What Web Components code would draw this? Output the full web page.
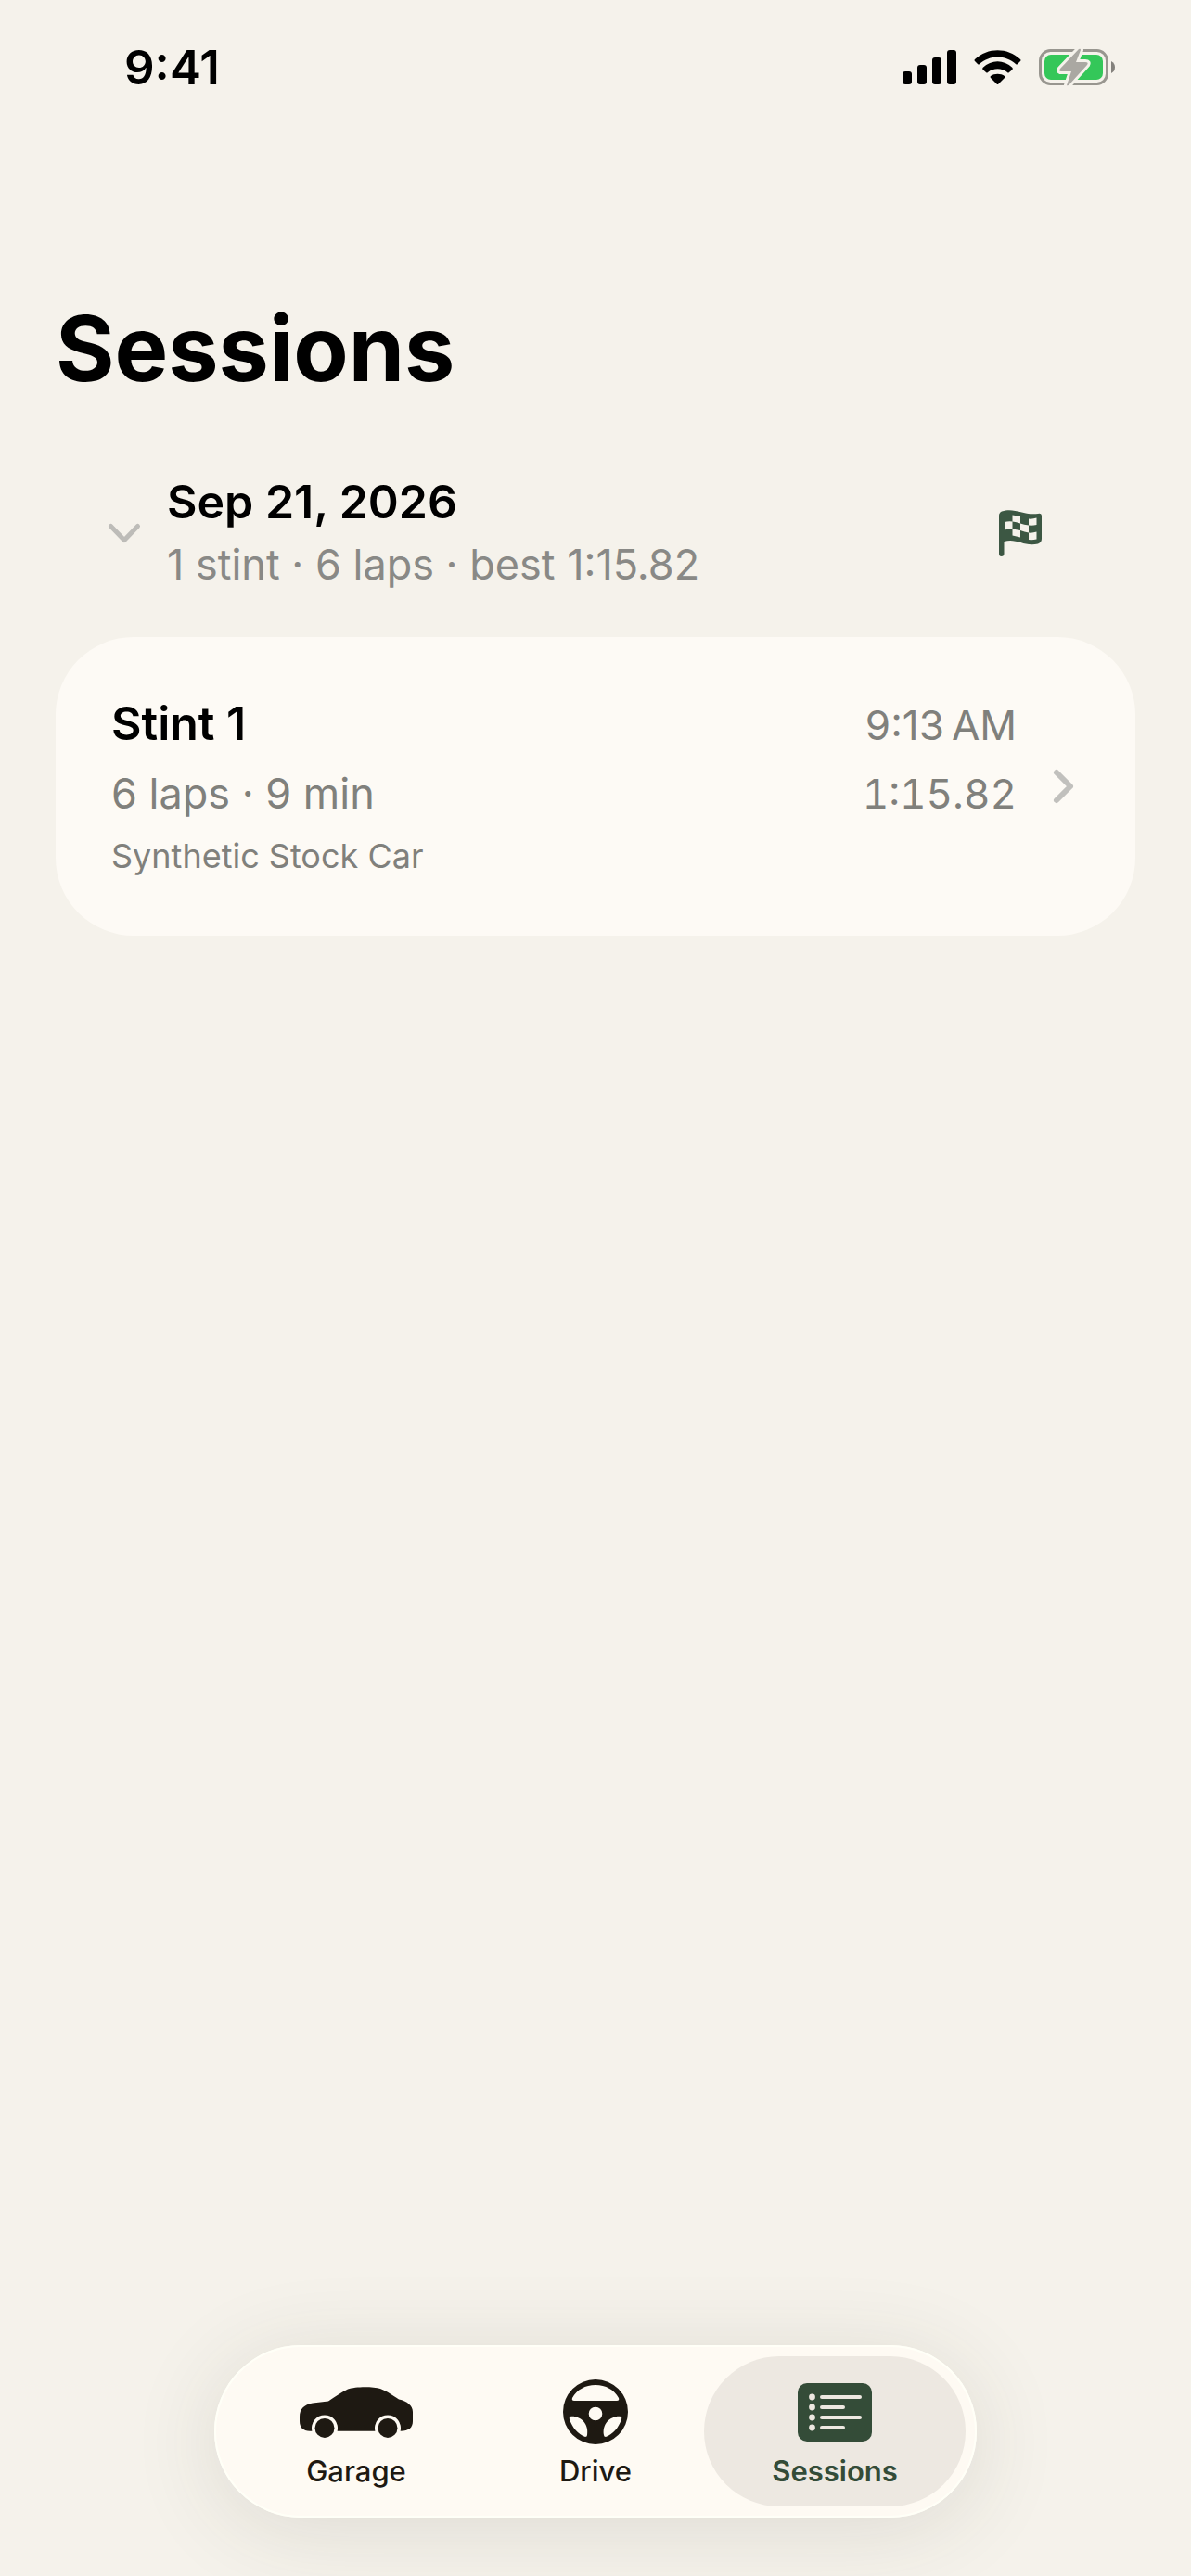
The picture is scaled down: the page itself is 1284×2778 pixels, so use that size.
<!DOCTYPE html>
<html lang="en">
<head>
<meta charset="utf-8">
<meta name="viewport" content="width=device-width, initial-scale=1">
<title>Sessions</title>
<style>
    html {
        --background: #f5f2eb;
        --surface: #fdfaf5;
        --ink: #1e1912;
        --accent: #344c38;
        --secondary: #80807c;
        --chevron: #c1c0bd;
    }

    body {
        margin: 0;
        min-height: 100vh;
        background: var(--background);
        color: #000;
        font-family: Inter, "Liberation Sans", sans-serif;
    }
</style>
</head>
<body>
<sl-app>
    <sl-status-bar slot="status" time="9:41"></sl-status-bar>
    <h1 slot="title">Sessions</h1>
    <sl-day-group>
        <span slot="date">Sep 21, 2026</span>
        <span slot="summary">1 stint · 6 laps · best 1:15.82</span>
        <sl-stint-card href="#stint-1">
            <span slot="name">Stint 1</span>
            <span slot="start">9:13&#8239;AM</span>
            <span slot="detail">6 laps · 9 min</span>
            <span slot="best">1:15.82</span>
            <span slot="car">Synthetic Stock Car</span>
        </sl-stint-card>
    </sl-day-group>
    <sl-tab-bar slot="tabs">
        <sl-tab href="#garage">
            <svg slot="icon" width="122" height="55" viewBox="0 0 122 55" aria-hidden="true">
                <path fill="currentColor" d="M11 47.700C4 47.500 0 44 0 37V32C0 24 5 19 14 17.500L31 15.500C38 11 44 6 52 2.500C60 -.5 79 -.5 87 2C95 5 100 9 107 13.500C116 15.500 122 20 122 27V37C122 44 118 47.500 108.600 47.700A14 14 0 1 0 81.400 47.700H40.600A14 14 0 1 0 13.400 47.700Z"/>
                <circle cx="27" cy="44.400" r="10.500" fill="currentColor"/>
                <circle cx="95" cy="44.400" r="10.500" fill="currentColor"/>
            </svg>
            Garage
        </sl-tab>
        <sl-tab href="#drive">
            <svg slot="icon" width="70" height="70" viewBox="0 0 70 70" aria-hidden="true">
                <path fill="currentColor" fill-rule="evenodd" d="M35 0A35 35 0 1 1 35 70A35 35 0 1 1 35 0ZM12 23H58Q61 23 60 20C55 11 46 6 35 6S15 11 10 20Q9 23 12 23ZM35 29.700A7.300 7.300 0 1 0 35 44.300A7.300 7.300 0 1 0 35 29.700ZM9 39.800Q6 40 7 43C10 52 16 59 24 62Q26 62 26 60C28 49 20 39.500 9 39.800ZM61 39.800Q64 40 63 43C60 52 54 59 46 62Q44 62 44 60C42 49 50 39.500 61 39.800Z"/>
            </svg>
            Drive
        </sl-tab>
        <sl-tab href="#sessions" selected>
            <svg slot="icon" width="80" height="63" viewBox="0 0 80 63" aria-hidden="true">
                <rect width="80" height="63" rx="10" fill="currentColor"/>
                <g fill="#ede8e1">
                    <circle cx="15.500" cy="15" r="3.400"/><circle cx="15.500" cy="26" r="3.400"/>
                    <circle cx="15.500" cy="37" r="3.400"/><circle cx="15.500" cy="48" r="3.400"/>
                    <rect x="24" y="13" width="45" height="4" rx="2"/><rect x="24" y="24" width="27" height="4" rx="2"/>
                    <rect x="24" y="35" width="45" height="4" rx="2"/><rect x="24" y="46" width="27" height="4" rx="2"/>
                </g>
            </svg>
            Sessions
        </sl-tab>
    </sl-tab-bar>
</sl-app>

<script>
class App extends HTMLElement {
    constructor() {
        super();
        this.attachShadow({ mode: 'open' });
        this.shadowRoot.innerHTML = `
            <style>
                :host {
                    display: flex;
                    flex-direction: column;
                    min-height: 100vh;
                }

                main {
                    flex: 1;
                    padding: 0 60px;
                }

                ::slotted(h1) {
                    margin: 174px 0 0;
                    font-size: 97px;
                    line-height: 124px;
                    font-weight: 700;
                }
            </style>
            <slot name="status"></slot>
            <main>
                <slot name="title"></slot>
                <slot></slot>
            </main>
            <slot name="tabs"></slot>
        `;
    }
}

class StatusBar extends HTMLElement {
    constructor() {
        super();
        this.attachShadow({ mode: 'open' });
        this.shadowRoot.innerHTML = `
            <style>
                :host {
                    display: flex;
                    align-items: center;
                    justify-content: space-between;
                    height: 60px;
                    padding: 43px 82px 37px 134px;
                }

                time {
                    font-size: 51px;
                    line-height: 60px;
                    font-weight: 600;
                }

                .indicators {
                    display: flex;
                    align-items: center;
                    gap: 18px;
                }

                svg {
                    display: block;
                }
            </style>
            <time></time>
            <div class="indicators">
                <svg width="59" height="38" viewBox="0 0 59 38" role="img" aria-label="Signal">
                    <rect x="0" y="23" width="10" height="14" rx="3"/>
                    <rect x="16" y="16" width="10" height="21" rx="3"/>
                    <rect x="32" y="8" width="10" height="29" rx="3"/>
                    <rect x="48" y="0" width="10" height="37" rx="3"/>
                </svg>
                <svg width="52" height="38" viewBox="0 0 52 38" role="img" aria-label="Wi-Fi">
                    <path d="M1 10C15 -3 36 -3 50 10Q51 11 50 12L47 15Q46 16 45 15C34 5 17 5 6 15Q5 16 4 15L1 12Q0 11 1 10Z"/>
                    <path d="M9.500 19C19 10 32 10 41.500 19Q42 20 41.500 21L38 24Q37 25 36 24C30 19 21 19 15 24Q14 25 13 24L9.500 21Q9 20 9.500 19Z"/>
                    <path d="M18 28C22 25 29 25 33 28Q34 29 33 30L26.500 36.500Q25.500 37.500 24.500 36.500L18 30Q17 29 18 28Z"/>
                </svg>
                <svg width="82" height="42" viewBox="0 0 82 42" role="img" aria-label="Battery charging">
                    <rect x="1.500" y="2.500" width="72" height="36" rx="11" fill="none" stroke="#98968f" stroke-width="3"/>
                    <path d="M78 14Q82 16 82 20.500T78 27Z" fill="#84827d"/>
                    <rect x="6" y="7" width="63" height="27" rx="7" fill="#34c759"/>
                    <path d="M43 1L23 22Q21 25 24 25H35L30 40Q31 41 33 39L52 18Q54 15 50 15H40L45 2Q45 0 43 1Z" fill="#aaa8a2" stroke="#f5f2eb" stroke-width="6" stroke-linejoin="round" paint-order="stroke"/>
                </svg>
            </div>
        `;
        this.shadowRoot.querySelector('time').textContent = this.getAttribute('time');
    }
}

class DayGroup extends HTMLElement {
    constructor() {
        super();
        this.attachShadow({ mode: 'open' });
        this.shadowRoot.innerHTML = `
            <style>
                :host {
                    display: block;
                    padding-top: 69px;
                }

                header {
                    display: flex;
                    align-items: center;
                    padding: 0 96px 44px 52px;
                }

                button {
                    border: 0;
                    padding: 0;
                    background: none;
                    color: inherit;
                    font: inherit;
                    text-align: left;
                    cursor: pointer;
                }

                .toggle {
                    flex: 1;
                    display: flex;
                    align-items: center;
                    gap: 24px;
                }

                .toggle svg {
                    color: #bdbcb8;
                }

                .text {
                    display: flex;
                    flex-direction: column;
                }

                .date {
                    font-size: 50px;
                    line-height: 68px;
                    font-weight: 600;
                }

                .summary {
                    font-size: 45px;
                    line-height: 68px;
                    color: #898986;
                }

                svg {
                    display: block;
                }

                .collapsed svg {
                    transform: rotate(-90deg);
                }
            </style>
            <header>
                <button class="toggle" type="button" aria-expanded="true">
                    <svg width="44" height="24" viewBox="0 0 44 24" fill="none" stroke="currentColor" stroke-width="5" stroke-linecap="round" stroke-linejoin="round" aria-hidden="true">
                        <path d="M7.500 4.500L22 19.500L36.500 4.500"/>
                    </svg>
                    <span class="text">
                        <span class="date"><slot name="date"></slot></span>
                        <span class="summary"><slot name="summary"></slot></span>
                    </span>
                </button>
                <button class="flag" type="button" aria-label="Laps">
                    <svg width="51" height="50" viewBox="0 0 51 50" aria-hidden="true">
                        <path fill="#3c5743" fill-rule="evenodd" d="M2.500 50Q0 50 0 47V6Q0 3 3 1.500C17 -3 26 6 42 4Q46 3 46 7V31Q46 35 42 36.500C27 40 19 30 5.500 34V47Q5.500 50 2.500 50ZM6 13V21.500Q10 20 14.500 20.500V27.500Q19 28.500 23 29.500V22Q27.500 23.500 32 24.500V32Q36 32.500 40.500 31.500V23.500Q36 25 32 24.500V16.500Q36 17 40.500 16V8.500Q36 10 32 9.500V16.500Q27 16 23 14.500V7Q19 6 14.500 5.500V12.500Q10 12 6 13ZM14.500 12.500Q19 13 23 14.500V22Q19 21 14.500 20.500Z"/>
                    </svg>
                </button>
            </header>
            <slot class="stints"></slot>
        `;
        const toggle = this.shadowRoot.querySelector('.toggle');
        toggle.addEventListener('click', this._toggle.bind(this));
    }

    _toggle(event) {
        const toggle = event.currentTarget;
        const collapsed = toggle.classList.toggle('collapsed');
        toggle.setAttribute('aria-expanded', String(!collapsed));
        this.shadowRoot.querySelector('.stints').hidden = collapsed;
    }
}

class StintCard extends HTMLElement {
    constructor() {
        super();
        this.attachShadow({ mode: 'open' });
        this.shadowRoot.innerHTML = `
            <style>
                :host {
                    display: block;
                }

                a {
                    display: flex;
                    align-items: center;
                    gap: 36px;
                    padding: 56px 60px;
                    border-radius: 84px;
                    background: var(--surface);
                    color: inherit;
                    text-decoration: none;
                }

                .rows {
                    flex: 1;
                }

                .row {
                    display: flex;
                    align-items: baseline;
                    justify-content: space-between;
                    line-height: 74px;
                    font-size: 45px;
                    color: var(--secondary);
                }

                .name {
                    font-size: 50px;
                    font-weight: 600;
                    color: #000;
                }

                .time {
                    font-size: 44px;
                }

                .best {
                    font-variant-numeric: tabular-nums;
                }

                .car {
                    font-size: 36px;
                    line-height: 60px;
                }

                svg {
                    display: block;
                    color: var(--chevron);
                }
            </style>
            <a>
                <div class="rows">
                    <div class="row">
                        <span class="name"><slot name="name"></slot></span>
                        <span class="time"><slot name="start"></slot></span>
                    </div>
                    <div class="row">
                        <slot name="detail"></slot>
                        <span class="time best"><slot name="best"></slot></span>
                    </div>
                    <div class="row car"><slot name="car"></slot></div>
                </div>
                <svg width="32" height="40" viewBox="0 0 32 40" fill="none" stroke="currentColor" stroke-width="6" stroke-linecap="round" stroke-linejoin="round" aria-hidden="true">
                    <path d="M7 5L22 20L7 35"/>
                </svg>
            </a>
        `;
        this.shadowRoot.querySelector('a').href = this.getAttribute('href');
    }
}

class TabBar extends HTMLElement {
    constructor() {
        super();
        this.attachShadow({ mode: 'open' });
        this.shadowRoot.innerHTML = `
            <style>
                :host {
                    position: sticky;
                    bottom: 0;
                    display: flex;
                    justify-content: center;
                    padding: 0 60px 63px;
                }

                nav {
                    display: flex;
                    padding: 12px;
                    border-radius: 93px;
                    background: #fefaf3;
                    box-shadow: inset 0 0 0 2px #fffff7, 0 12px 96px rgba(60, 60, 40, 0.12);
                }

                ::slotted(sl-tab:not(:first-child)) {
                    margin-left: -24px;
                }
            </style>
            <nav><slot></slot></nav>
        `;
    }
}

class Tab extends HTMLElement {
    constructor() {
        super();
        this.attachShadow({ mode: 'open' });
        this.shadowRoot.innerHTML = `
            <style>
                :host {
                    display: block;
                    color: var(--ink);
                    font-weight: 500;
                }

                :host([selected]) {
                    color: var(--accent);
                    font-weight: 600;
                }

                a {
                    display: flex;
                    flex-direction: column;
                    align-items: center;
                    width: 282px;
                    height: 142px;
                    padding-bottom: 20px;
                    border-radius: 81px;
                    color: inherit;
                    font-size: 31px;
                    line-height: 36px;
                    text-decoration: none;
                }

                :host([selected]) a {
                    background: #ede8e1;
                }

                .icon {
                    flex: 1;
                    display: flex;
                    align-items: center;
                    padding-top: 14px;
                }
            </style>
            <a>
                <span class="icon"><slot name="icon"></slot></span>
                <span><slot></slot></span>
            </a>
        `;
        const link = this.shadowRoot.querySelector('a');
        link.href = this.getAttribute('href');
        if (this.hasAttribute('selected')) {
            link.setAttribute('aria-current', 'page');
        }
    }
}

customElements.define('sl-app', App);
customElements.define('sl-status-bar', StatusBar);
customElements.define('sl-day-group', DayGroup);
customElements.define('sl-stint-card', StintCard);
customElements.define('sl-tab-bar', TabBar);
customElements.define('sl-tab', Tab);
</script>
</body>
</html>
